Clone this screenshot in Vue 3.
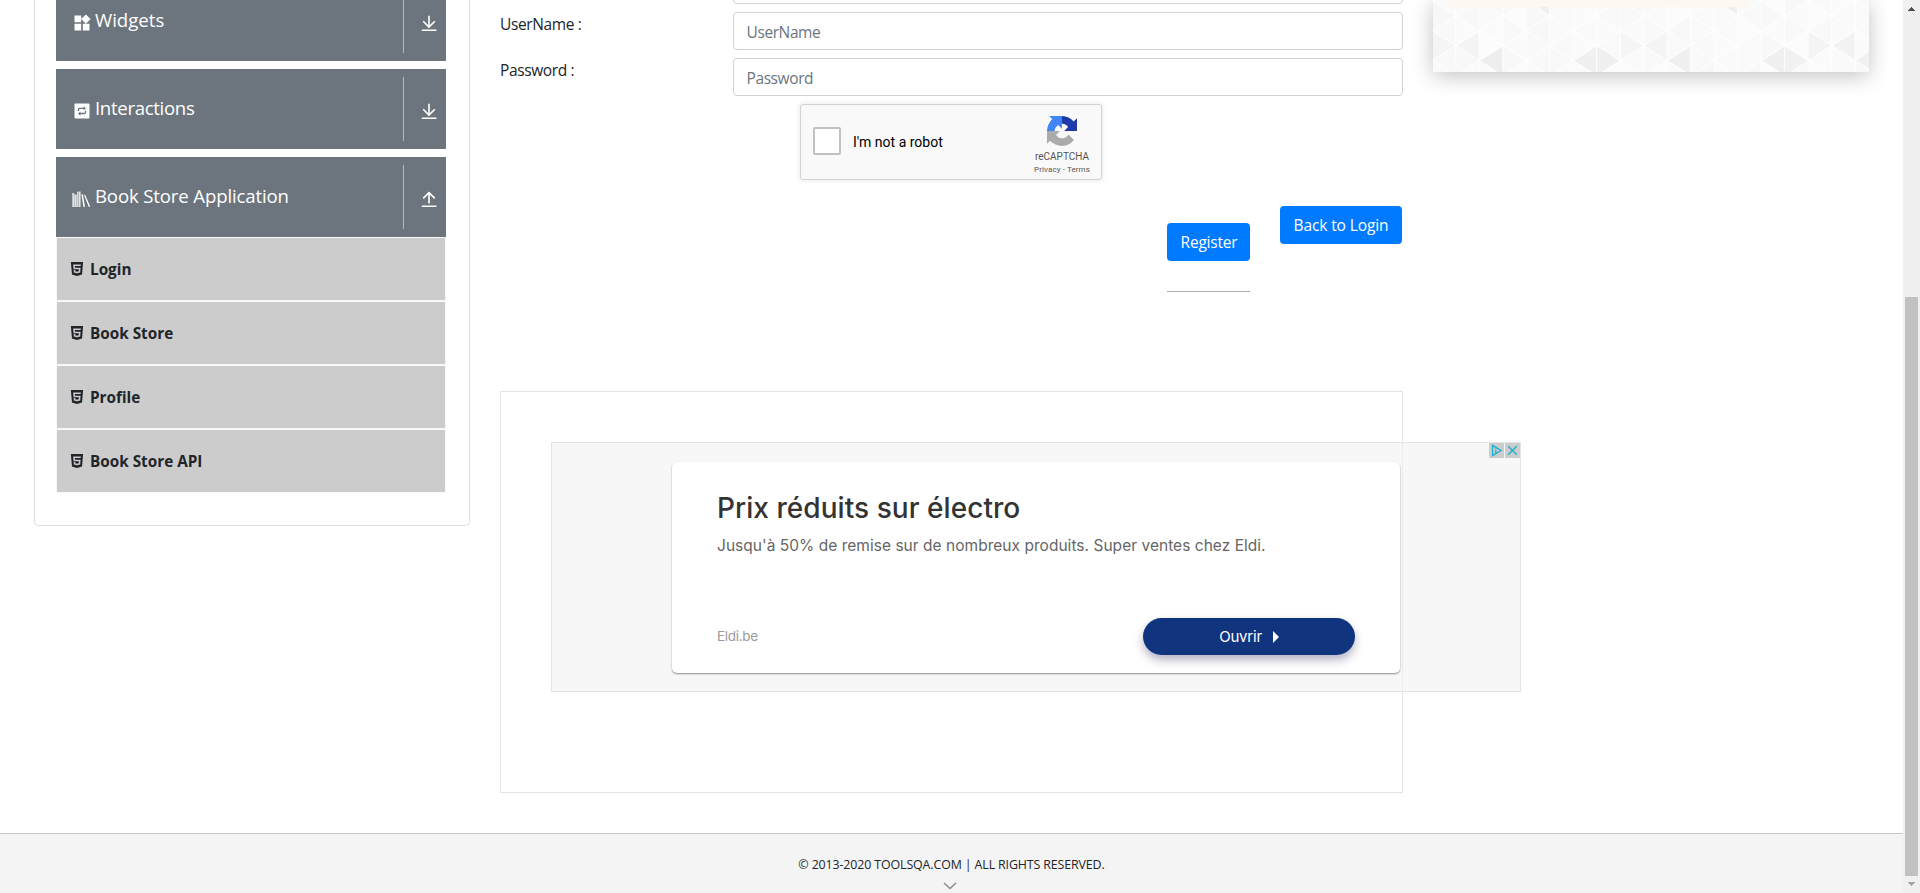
<script setup>
const groups = [
  { title: 'Widgets', icon: 'widgets', open: false },
  { title: 'Interactions', icon: 'repeat', open: false },
  { title: 'Book Store Application', icon: 'books', open: true },
]
const links = ['Login', 'Book Store', 'Profile', 'Book Store API']

const STEP = 23.5
const OFFSET = -0.8
const vertexY = (col) => (col % 2 === 0 ? 0.7 : 15.7)
const accents = {
  '2L60': 0.065, '6L60': 0.06, '7R60': 0.06, '10L60': 0.06, '14L60': 0.06, '15R60': 0.055, '18L60': 0.055,
  '0R45': 0.04, '1L45': 0.045, '8R45': 0.04, '9L45': 0.045, '16R45': 0.045, '17L45': 0.05,
  '4L0': 0.06, '12L0': 0.06, '0R15': 0.03,
}
const triangles = []
for (let c = 0; c < 19; c++) {
  const x1 = OFFSET + c * STEP
  const x2 = x1 + STEP
  for (let k = -1; k < 3; k++) {
    const yl = vertexY(c) + 30 * k
    const yr = vertexY(c + 1) + 30 * k
    const noise = (n) => 0.012 + 0.016 * (((c * 37 + k * 53 + n * 29 + c * k * 11 + 400) % 17) / 17)
    triangles.push({
      points: `${x1},${yl} ${x2},${yl - 15} ${x2},${yl + 15}`,
      shade: accents[`${c}L${Math.floor(yl)}`] ?? noise(0),
    })
    triangles.push({
      points: `${x2},${yr} ${x1},${yr - 15} ${x1},${yr + 15}`,
      shade: accents[`${c}R${Math.floor(yr)}`] ?? noise(1),
    })
  }
}
</script>

<template>
  <div class="window">
    <div class="page">
      <main class="columns">
        <aside class="sidebar">
          <div v-for="g in groups" :key="g.title" class="group">
            <svg v-if="g.icon === 'widgets'" class="gicon" viewBox="0 0 24 24"><path d="M13 13v8h8v-8h-8zM3 21h8v-8H3v8zM3 3v8h8V3H3zm13.66-1.31L11 7.34 16.66 13l5.66-5.66-5.66-5.65z" /></svg>
            <svg v-else-if="g.icon === 'repeat'" class="gicon" viewBox="0 0 20 20">
              <rect x="2.5" y="2.5" width="15" height="15" rx="1" />
              <path class="cut" d="M6.5 10V8.4Q6.5 7.4 7.5 7.4H12M13.5 9.8V11.4Q13.5 12.5 12.5 12.5H8" />
              <path class="cutfill" d="M11.6 5.2L14 7.4L11.6 9.3zM8.4 10.6L6 12.5L8.4 14.7z" />
            </svg>
            <svg v-else class="gicon books" viewBox="0 0 20 20">
              <path opacity=".8" d="M1.3 4h1.9v14H1.3zM3.5 5.5h2.2V18H3.5zM6.1 2.8h1.1V18H6.1zM7.6 2.4h2V18h-2z" />
              <path d="M10.4 5.4l1.5-.2 2.1 12.6-1.5.2zM13 5.9l1-.3 5.2 12-1.4.4z" />
            </svg>
            <span class="gtitle">{{ g.title }}</span>
            <span class="toggle">
              <svg viewBox="0 0 16 17" width="16" height="17">
                <path v-if="!g.open" d="M8 .8V11.6M2.2 6.2L8 12L13.8 6.2M.8 15.2H15.4" />
                <path v-else d="M8 12.6V1.6M2.2 7.4L8 1.6L13.8 7.4M.8 15.2H15.4" />
              </svg>
            </span>
          </div>
          <ul class="links">
            <li v-for="l in links" :key="l">
              <svg viewBox="0 0 24 24" width="14" height="14"><path d="M1.5 0h21l-1.91 21.563L11.977 24l-8.564-2.438L1.5 0zm7.031 9.75l-.232-2.718 10.059.003.23-2.622L5.412 4.41l.698 8.01h9.126l-.326 3.426-2.91.804-2.955-.81-.188-2.11H6.248l.33 4.171L12 19.351l5.379-1.443.744-8.157H8.531z" /></svg>
              <span>{{ l }}</span>
            </li>
          </ul>
        </aside>

        <section class="content">
          <div class="row"><span class="label"></span><input class="field" type="text" /></div>
          <div class="row"><label class="label">UserName :</label><input class="field" type="text" placeholder="UserName" /></div>
          <div class="row"><label class="label">Password :</label><input class="field" type="password" placeholder="Password" /></div>

          <div class="captcha">
            <span class="check"></span>
            <span class="robot">I'm not a robot</span>
            <div class="brand">
              <svg viewBox="0 0 64 64" width="30" height="30">
                <path fill="#1c3aa9" d="M64 31.955l-.033-1.37V4.687l-7.16 7.16C50.948 4.674 42.033.093 32.05.093c-10.4 0-19.622 4.96-25.458 12.64l11.736 11.86a15.55 15.55 0 0 1 4.754-5.334c2.05-1.6 4.952-2.906 8.968-2.906.485 0 .86.057 1.135.163 4.976.393 9.288 3.14 11.828 7.124l-8.307 8.307L64 31.953" />
                <path fill="#4285f4" d="M31.862.094l-1.37.033H4.594l7.16 7.16C4.58 13.147 0 22.06 0 32.046c0 10.4 4.96 19.622 12.64 25.458L24.5 45.768a15.55 15.55 0 0 1-5.334-4.754c-1.6-2.05-2.906-4.952-2.906-8.968 0-.485.057-.86.163-1.135.393-4.976 3.14-9.288 7.124-11.828l8.307 8.307L31.86.095" />
                <path fill="#ababab" d="M.001 32.045l.033 1.37v25.898l7.16-7.16c5.86 7.173 14.774 11.754 24.76 11.754 10.4 0 19.622-4.96 25.458-12.64l-11.736-11.86a15.55 15.55 0 0 1-4.754 5.334c-2.05 1.6-4.952 2.906-8.968 2.906-.485 0-.86-.057-1.135-.163-4.976-.393-9.288-3.14-11.828-7.124l8.307-8.307c-10.522.04-22.4.066-27.295-.005" />
              </svg>
              <span class="name">reCAPTCHA</span>
              <span class="terms">Privacy - Terms</span>
            </div>
          </div>

          <div class="actions">
            <div class="register"><button class="btn reg">Register</button><div class="rule"></div></div>
            <button class="btn back">Back to Login</button>
          </div>

          <div class="adframe">
            <div class="ad">
              <div class="card">
                <div class="headline">Prix réduits sur électro</div>
                <div class="sub">Jusqu'à 50% de remise sur de nombreux produits. Super ventes chez Eldi.</div>
                <div class="cardfoot">
                  <span class="site">Eldi.be</span>
                  <span class="cta"><span>Ouvrir</span><svg viewBox="0 0 6 12" width="6" height="12"><path d="M0 0L6 6L0 12z" /></svg></span>
                </div>
              </div>
              <div class="adbadges">
                <svg viewBox="0 0 15 15" width="15" height="15"><path d="M3.6 2.4L12 7.5L3.6 12.7zM6.8 4.8v.9M6.8 6.8v3.6" /></svg>
                <svg viewBox="0 0 15 15" width="15" height="15"><path d="M3.2 3.2L11.8 11.8M11.8 3.2L3.2 11.8" /></svg>
              </div>
            </div>
          </div>
        </section>

        <aside class="promo">
          <svg viewBox="0 0 436 72" width="436" height="72">
            <polygon v-for="(t, i) in triangles" :key="i" class="tri" :points="t.points" :fill-opacity="t.shade" />
          </svg>
          <div class="peach"></div>
        </aside>
      </main>

      <footer class="footer">
        <span>© 2013-2020 TOOLSQA.COM | ALL RIGHTS RESERVED.</span>
        <svg class="chev" viewBox="0 0 14 8" width="14" height="8"><path d="M1 1L7 6.5L13 1" /></svg>
      </footer>
    </div>

    <div class="scrollbar">
      <svg viewBox="0 0 7 4" width="7" height="4"><path fill="#505050" d="M3 0h1v1h1v1h1v1h1v1H0V3h1V2h1V1h1z" /></svg>
      <div class="thumb"></div>
      <svg viewBox="0 0 7 4" width="7" height="4"><path fill="#a3a3a3" d="M0 0h7v1H6v1H5v1H4v1H3V3H2V2H1V1H0z" /></svg>
    </div>
  </div>
</template>

<style>
body { margin: 0; overflow: hidden; }
</style>

<style scoped>
* { box-sizing: border-box; }
.window { display: flex; width: 1920px; height: 893px; overflow: hidden; background: #fff; font-family: "Open Sans", "Noto Sans", sans-serif; font-size: 15.5px; color: #212529; }
.page { width: 1903px; display: flex; flex-direction: column; }
.columns { height: 833px; display: grid; grid-template-columns: 436px 903px 436px; gap: 30px; padding-left: 34px; align-items: start; }

.sidebar { height: 526px; padding: 0 23px 0 21px; border: 1px solid #dfdfdf; border-top: 0; border-radius: 0 0 5px 5px; overflow: hidden; }
.group { height: 80px; margin-bottom: 8px; display: flex; background: #6c757d; color: #fff; padding-left: 16px; width: 390px; }
.group:first-child { margin-top: -19px; }
.group:nth-child(3) { margin-bottom: 0; }
.gicon { width: 20px; height: 20px; margin: 32px 3px 0 0; fill: #fff; }
.books { margin: 32px 4px 0 -1px; }
.gicon .cut { fill: none; stroke: #6c757d; stroke-width: 1.3; }
.gicon .cutfill { fill: #6c757d; }
.gtitle { flex: 1; line-height: 77px; font-size: 18.6px; letter-spacing: -0.2px; }
.group:nth-child(2) .gtitle { letter-spacing: -0.32px; }
.group:nth-child(3) .gtitle { letter-spacing: -0.14px; }
.group:first-child .gtitle { letter-spacing: 0; }
.toggle { width: 43px; height: 64px; margin-top: 8px; border-left: 1px solid #b4b9bd; padding: 26px 0 0 16.5px; }
.toggle svg { display: block; fill: none; stroke: #fff; stroke-width: 1.6; }
.links { list-style: none; margin: 0; padding: 1px; width: 390px; background: #f8f8f8; display: flex; flex-direction: column; gap: 2px; }
.links li { height: 62px; display: flex; background: #ccc; padding-left: 13px; line-height: 63px; font-weight: 700; font-size: 15.3px; letter-spacing: 0; }
.links svg { margin: 24px 6px 0 0; fill: #212529; }

.content { display: flex; flex-direction: column; }
.row { display: flex; height: 38px; margin-bottom: 8px; }
.row:first-child { margin-top: -34px; }
.label { width: 233px; line-height: 25px; letter-spacing: -0.38px; }
.field { width: 670px; height: 38px; border: 1px solid #ced4da; border-radius: 4px; padding: 1px 12px 0 12.5px; font: inherit; letter-spacing: -0.4px; background: #fff; }
.field::placeholder { color: #6c757d; opacity: 1; }

.captcha { width: 302px; height: 76px; margin-left: 300px; display: flex; border: 1px solid #d3d3d3; border-radius: 3px; background: #f9f9f9; box-shadow: 0 0 4px 1px rgba(0, 0, 0, 0.08); font-family: Roboto, sans-serif; color: #000; }
.check { width: 28px; height: 28px; margin: 22px 12px 0; border: 2px solid #c1c1c1; border-radius: 2px; background: #fff; }
.robot { font-size: 14px; line-height: 74px; flex: 1; }
.brand { width: 56px; margin-right: 11px; padding-top: 11px; display: flex; flex-direction: column; align-items: center; color: #555; }
.name { font-size: 10px; line-height: 12px; margin-top: 5px; }
.terms { font-size: 8px; line-height: 10px; margin-top: 2px; letter-spacing: 0.1px; white-space: nowrap; }

.actions { display: flex; justify-content: flex-end; align-items: flex-start; gap: 30px; padding: 26px 1px 0 0; height: 211px; }
.btn { height: 38px; border: 0; border-radius: 4px; background: #007bff; color: #fff; font: inherit; line-height: 38px; padding: 0; display: block; text-align: center; }
.register { margin-top: 17px; width: 83px; }
.reg { width: 83px; letter-spacing: -0.2px; padding-left: 1px; }
.rule { margin-top: 30px; border-top: 1px solid #acacac; }
.back { width: 122px; letter-spacing: -0.1px; }

.adframe { height: 402px; border: 1px solid #e5e5e5; padding: 50px; }
.ad { position: relative; width: 970px; height: 250px; padding: 19px 0 0 120px; border: 1px solid #e4e4e4; background: rgba(241, 241, 241, 0.6); font-family: Inter, sans-serif; }
.card { width: 728px; height: 211px; padding: 0 45px 0 45px; border-radius: 5px; background: #fff; box-shadow: 0 1px 2px rgba(0, 0, 0, 0.32), 0 1px 1px rgba(0, 0, 0, 0.15); overflow: hidden; }
.headline { font-size: 28px; font-weight: 500; line-height: 36px; margin-top: 28px; letter-spacing: 0.05px; color: #333; }
.sub { font-size: 15.5px; line-height: 24px; margin-top: 8px; letter-spacing: 0.03px; color: #666; white-space: nowrap; }
.cardfoot { display: flex; justify-content: space-between; margin-top: 60px; line-height: 37px; }
.site { font-size: 13.5px; color: #999; letter-spacing: -0.3px; }
.cta { display: flex; align-items: center; justify-content: center; gap: 11px; width: 212px; height: 37px; border-radius: 19px; background: #11347f; color: #fff; font-size: 15px; letter-spacing: -0.2px; box-shadow: 0 5px 10px rgba(20, 20, 70, 0.32); }
.cta svg { fill: #fff; }
.adbadges { position: absolute; top: 0; right: 0; display: flex; gap: 1px; }
.adbadges svg { background: #ccc; fill: none; stroke: #12b2d0; stroke-width: 1.3; }

.promo { position: relative; width: 436px; height: 72px; background: #fff; box-shadow: 0 4px 20px rgba(0, 0, 0, 0.24); }
.promo svg { display: block; }
.tri { fill: #000; stroke: #fff; stroke-opacity: 0.6; stroke-width: 1.2; }
.peach { position: absolute; left: 15px; top: 0; width: 300px; height: 7px; background: #fef8f2; }

.footer { height: 60px; border-top: 1px solid #c8c8c8; background: #f4f4f4; display: flex; flex-direction: column; align-items: center; font-size: 12.4px; letter-spacing: -0.12px; line-height: 62px; }
.footer span { height: 48px; white-space: nowrap; }
.chev { fill: none; stroke: #888; stroke-width: 1.4; margin-right: 3px; flex: none; }

.scrollbar { width: 17px; height: 893px; background: #f0f0f0; display: flex; flex-direction: column; align-items: center; padding: 7px 0; }
.thumb { width: 13px; height: 579px; margin: 286px 0 6px; background: #c1c1c1; flex: none; }
.scrollbar svg { flex: none; }
</style>
